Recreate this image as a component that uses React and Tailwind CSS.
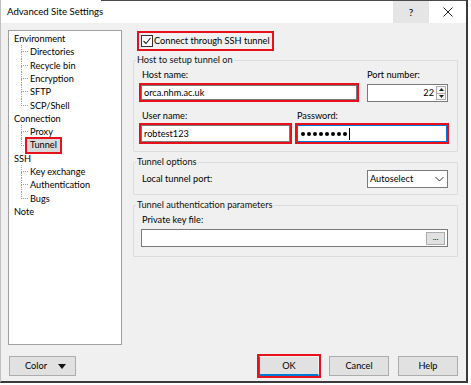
import React from "react";

function TreeGroup({ label, items, selected }) {
  return (
    <div>
      <div className="h-[13.3px] flex items-center pl-[5px]">{label}</div>
      {items.length > 0 && (
        <div className="ml-[12px]">
          {items.map((it, i) => {
            const last = i === items.length - 1;
            return (
              <div key={it} className="h-[13.3px] flex items-stretch">
                <div className="w-[7px] flex flex-col shrink-0">
                  <div className="flex-1 border-l border-b border-dotted border-[#a0a0a0]" />
                  <div className={"flex-1 " + (last ? "" : "border-l border-dotted border-[#a0a0a0]")} />
                </div>
                <div className="flex items-center">
                  {it === selected ? (
                    <span className="h-[17px] flex items-center border-2 border-[#e8111b] ml-[-3px]">
                      <span className="h-full flex items-center bg-[#d9d9d9] px-[3px]">{it}</span>
                    </span>
                  ) : (
                    <span className="pl-[2px]">{it}</span>
                  )}
                </div>
              </div>
            );
          })}
        </div>
      )}
    </div>
  );
}

function Group({ label, className, children }) {
  return (
    <fieldset className={"border border-[#dcdcdc] rounded-[1px] " + className}>
      <legend className="ml-[2px] px-[1px] leading-[12px] text-[#111]">{label}</legend>
      {children}
    </fieldset>
  );
}

function Btn({ children, className = "" }) {
  return (
    <div className={"w-[60px] h-[20px] bg-[#e1e1e1] border border-[#adadad] flex items-center justify-center " + className}>
      {children}
    </div>
  );
}

function Dot() {
  return <span className="w-[4px] h-[4px] rounded-full bg-black mr-[2px] shrink-0" />;
}

export default function App() {
  return (
    <div className="w-[471px] h-[385px] bg-white font-['Lato',sans-serif] text-[9.2px] text-black leading-none whitespace-nowrap">
      <div className="w-[468px] h-[383px] flex flex-col border-l border-l-[#c0c0c0] border-r-2 border-r-[#3a3a3a] border-b-2 border-b-[#3a3a3a]">
        <div className="h-[1px] flex shrink-0">
          <div className="w-[100px] bg-white" />
          <div className="flex-1 bg-[#4a4a4a]" />
        </div>
        <div className="h-[22px] shrink-0 bg-white flex items-center">
          <span className="pl-[6px] flex-1 text-[9.6px]">Advanced Site Settings</span>
          <div className="w-[36px] h-full bg-[#e5e5e5] flex items-center justify-center text-[10px]">?</div>
          <div className="w-[37px] h-full flex items-center justify-center">
            <svg width="10" height="10" viewBox="0 0 10 10">
              <path d="M0.5 0.5 L9.5 9.5 M9.5 0.5 L0.5 9.5" stroke="#222" strokeWidth="1" fill="none" />
            </svg>
          </div>
        </div>
        <div className="flex-1 bg-[#f0f0f0] flex flex-col">
          <div className="flex pl-[7px] pt-[7px]">
            <div className="w-[114px] h-[315px] bg-white border border-[#a0a0a0] pt-[1px] shrink-0">
              <TreeGroup label="Environment" items={["Directories", "Recycle bin", "Encryption", "SFTP", "SCP/Shell"]} />
              <TreeGroup label="Connection" items={["Proxy", "Tunnel"]} selected="Tunnel" />
              <TreeGroup label="SSH" items={["Key exchange", "Authentication", "Bugs"]} />
              <TreeGroup label="Note" items={[]} />
            </div>
            <div className="ml-[11px] w-[325px] flex flex-col">
              <div className="mt-[1px] ml-[4px] w-fit h-[20px] border-2 border-[#e8111b] flex items-center pl-[2px] pr-[2px]">
                <div className="w-[12px] h-[12px] border border-[#333] bg-white flex items-center justify-center shrink-0">
                  <svg width="10" height="10" viewBox="0 0 10 10">
                    <path d="M1.5 5 L4 7.5 L8.5 2" stroke="#222" strokeWidth="1.1" fill="none" />
                  </svg>
                </div>
                <span className="ml-[1px]">Connect through SSH tunnel</span>
              </div>

              <Group label="Host to setup tunnel on" className="mt-[3px] h-[98px]">
                <div className="flex pt-[3px]">
                  <div className="ml-[5px] w-[220px]">
                    <div className="h-[12px] flex items-center pl-[3px]">Host name:</div>
                    <div className="mt-[2px] h-[19px] border-2 border-[#e8111b]">
                      <div className="h-full bg-white border border-[#7a7a7a] flex items-center pl-[2px]">orca.nhm.ac.uk</div>
                    </div>
                  </div>
                  <div className="ml-[8px] w-[81px]">
                    <div className="h-[12px] flex items-center">Port number:</div>
                    <div className="mt-[3px] h-[18px] bg-white border border-[#7a7a7a] flex items-center justify-end">
                      <span className="pr-[2px]">22</span>
                      <div className="w-[10px] h-[14px] mr-[1px] border border-[#adadad] bg-[#f5f5f5] flex flex-col">
                        <div className="flex-1 flex items-center justify-center border-b border-[#adadad]">
                          <svg width="5" height="3" viewBox="0 0 5 3"><path d="M0 3 L2.5 0 L5 3 Z" fill="#222" /></svg>
                        </div>
                        <div className="flex-1 flex items-center justify-center">
                          <svg width="5" height="3" viewBox="0 0 5 3"><path d="M0 0 L2.5 3 L5 0 Z" fill="#222" /></svg>
                        </div>
                      </div>
                    </div>
                  </div>
                </div>
                <div className="flex mt-[8px]">
                  <div className="ml-[5px] w-[153px]">
                    <div className="h-[12px] flex items-center pl-[3px]">User name:</div>
                    <div className="mt-[1px] h-[21px] border-2 border-[#e8111b]">
                      <div className="h-full bg-white border border-[#7a7a7a] flex items-center pl-[2px]">robtest123</div>
                    </div>
                  </div>
                  <div className="ml-[3px] w-[154px]">
                    <div className="h-[12px] flex items-center pl-[2px]">Password:</div>
                    <div className="mt-[1px] h-[21px] border-2 border-[#e8111b]">
                      <div className="h-full bg-white border border-[#0078d7] flex items-center pl-[3px]">
                        <Dot /><Dot /><Dot /><Dot /><Dot /><Dot /><Dot /><Dot />
                        <span className="w-[1px] h-[12px] bg-black" />
                      </div>
                    </div>
                  </div>
                </div>
              </Group>

              <Group label="Tunnel options" className="mt-[4px] h-[39px]">
                <div className="flex items-center pt-[2px]">
                  <span className="ml-[8px] flex-1">Local tunnel port:</span>
                  <div className="mr-[9px] w-[81px] h-[18px] bg-white border border-[#7a7a7a] flex items-center pl-[2px]">
                    <span className="flex-1">Autoselect</span>
                    <svg width="9" height="6" viewBox="0 0 9 6" className="mr-[3px]">
                      <path d="M0.5 1 L4.5 5 L8.5 1" stroke="#333" strokeWidth="1" fill="none" />
                    </svg>
                  </div>
                </div>
              </Group>

              <Group label="Tunnel authentication parameters" className="mt-[4px] h-[58px]">
                <div className="h-[12px] flex items-center ml-[8px] mt-[3px]">Private key file:</div>
                <div className="mt-[3px] ml-[7px] w-[307px] h-[18px] bg-white border border-[#7a7a7a] flex items-center justify-end">
                  <div className="w-[19px] h-[13px] mr-[2px] bg-[#e1e1e1] border border-[#adadad] flex items-center justify-center text-[8px] leading-none pb-[3px]">...</div>
                </div>
              </Group>
            </div>
          </div>
          <div className="flex items-center h-[24px] mt-[9px] pl-[8px] pr-[8px]">
            <div className="w-[67px] h-[20px] bg-[#e1e1e1] border border-[#adadad] flex items-center">
              <span className="flex-1 text-center pl-[4px]">Color</span>
              <svg width="8" height="5" viewBox="0 0 8 5" className="mr-[9px]"><path d="M0 0 L8 0 L4 5 Z" fill="#111" /></svg>
            </div>
            <div className="flex-1" />
            <div className="border-2 border-[#e8111b] h-[24px]">
              <div className="w-[60px] h-full bg-[#e1e1e1] border border-[#f0f0f0] border-l-[#0078d7] border-b-2 border-b-[#0078d7] flex items-center justify-center">OK</div>
            </div>
            <Btn className="ml-[8px]">Cancel</Btn>
            <Btn className="ml-[9px]">Help</Btn>
          </div>
        </div>
      </div>
    </div>
  );
}
